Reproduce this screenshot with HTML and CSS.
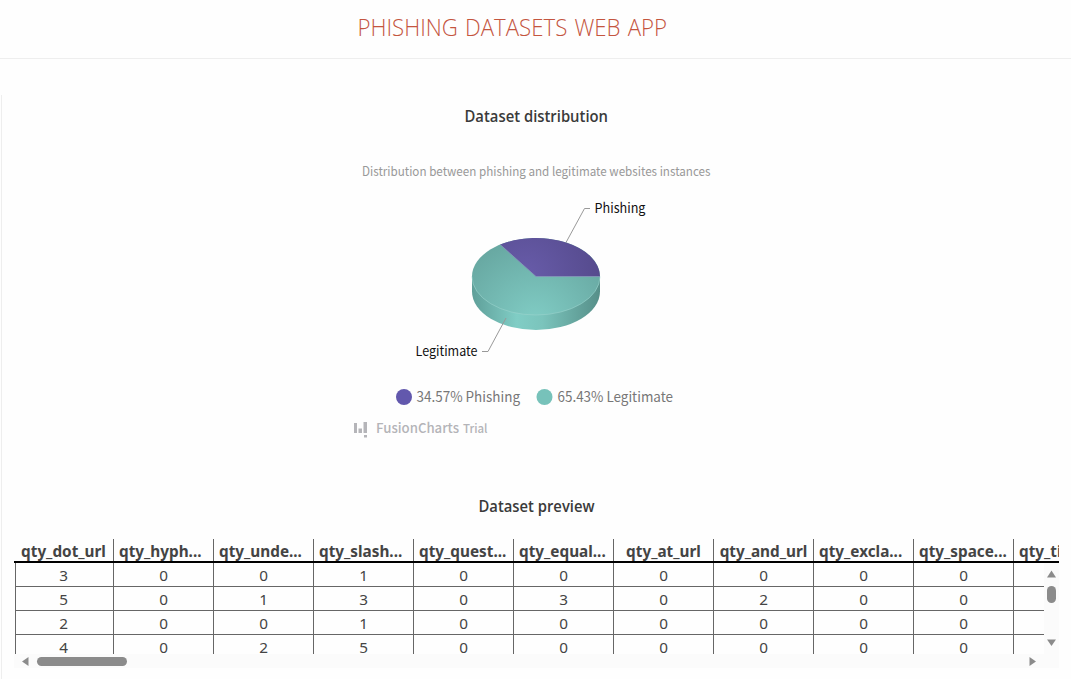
FILE: index.html
```html
<!DOCTYPE html>
<html lang="en">
<head>
<meta charset="utf-8">
<title>Phishing Datasets Web App</title>
<link rel="stylesheet" href="styles.css">
</head>
<body>
<header class="header"><svg class="title" width="320" height="40" role="heading" aria-level="1"><text x="4.500" y="26" textLength="309.500" lengthAdjust="spacingAndGlyphs">PHISHING DATASETS WEB APP</text></svg></header>
<main class="card">
  <svg class="chart" width="400" height="440" viewBox="336 95 400 440">
    <defs>
      <radialGradient id="tealTop" gradientUnits="userSpaceOnUse" cx="535" cy="322" r="95">
        <stop offset="0" stop-color="#81cdc5"/><stop offset="1" stop-color="#65a49e"/>
      </radialGradient>
      <radialGradient id="purpleTop" gradientUnits="userSpaceOnUse" cx="525" cy="276" r="78">
        <stop offset="0" stop-color="#685caa"/><stop offset="1" stop-color="#554a8c"/>
      </radialGradient>
      <linearGradient id="tealSide">
        <stop offset="0" stop-color="#5f9f99"/><stop offset=".35" stop-color="#80cdc5"/><stop offset=".55" stop-color="#7bc4bc"/><stop offset="1" stop-color="#568f89"/>
      </linearGradient>
    </defs>
    <text class="heading" x="464.500" y="122" textLength="143.500" lengthAdjust="spacingAndGlyphs">Dataset distribution</text>
    <text class="caption" x="362" y="176" textLength="348.500" lengthAdjust="spacingAndGlyphs">Distribution between phishing and legitimate websites instances</text>
    <path fill="url(#tealSide)" d="M472 276.500V291.500A64 38.500 0 0 0 600 291.500V276.500Z"/>
    <ellipse fill="url(#tealTop)" cx="536" cy="276.500" rx="64" ry="38.500"/>
    <path class="rim" d="M472 276.500A64 38.500 0 0 0 600 276.500"/>
    <path fill="url(#purpleTop)" d="M536 276.500L500.200 244.600A64 38.500 0 0 1 600 276.500Z"/>
    <path class="seam" d="M500.200 244.600L536 276.500H600"/>
    <path class="leader" d="M566 242.500L584.500 208.500H590M506 318L488 351.500H482"/>
    <text class="label" x="594.500" y="213" textLength="51" lengthAdjust="spacingAndGlyphs">Phishing</text>
    <text class="label" x="415.500" y="356" textLength="62" lengthAdjust="spacingAndGlyphs">Legitimate</text>
    <circle cx="404" cy="397" r="8" fill="#6258ad"/>
    <text class="legend" x="416.500" y="402" textLength="103.500" lengthAdjust="spacingAndGlyphs">34.57% Phishing</text>
    <circle cx="544.500" cy="397" r="8" fill="#77c2ba"/>
    <text class="legend" x="557.500" y="402" textLength="115.500" lengthAdjust="spacingAndGlyphs">65.43% Legitimate</text>
    <path class="logo" d="M354 423h3v10h-3zM358.500 428.500h3.500v4.500h-3.500zM363.500 422h3.500v11h-3.500zM364 435h3v2.500h-3z"/>
    <text class="credit" x="376" y="433" textLength="83" lengthAdjust="spacingAndGlyphs">FusionCharts</text>
    <text class="credit trial" x="463" y="433" textLength="24.500" lengthAdjust="spacingAndGlyphs">Trial</text>
    <text class="heading" x="478.500" y="512" textLength="116" lengthAdjust="spacingAndGlyphs">Dataset preview</text>
  </svg>
  <section class="grid">
    <div class="row head"><div>qty_dot_url</div><div class="long">qty_hyph...</div><div class="long">qty_unde...</div><div class="long">qty_slash...</div><div class="long">qty_quest...</div><div class="long">qty_equal...</div><div>qty_at_url</div><div>qty_and_url</div><div class="long">qty_excla...</div><div class="long">qty_space...</div><div class="long">qty_ti</div></div>
    <div class="middle">
      <div class="rows">
        <div class="row"><div>3</div><div>0</div><div>0</div><div>1</div><div>0</div><div>0</div><div>0</div><div>0</div><div>0</div><div>0</div><div></div></div>
        <div class="row"><div>5</div><div>0</div><div>1</div><div>3</div><div>0</div><div>3</div><div>0</div><div>2</div><div>0</div><div>0</div><div></div></div>
        <div class="row"><div>2</div><div>0</div><div>0</div><div>1</div><div>0</div><div>0</div><div>0</div><div>0</div><div>0</div><div>0</div><div></div></div>
        <div class="row"><div>4</div><div>0</div><div>2</div><div>5</div><div>0</div><div>0</div><div>0</div><div>0</div><div>0</div><div>0</div><div></div></div>
      </div>
      <svg class="vbar" width="15" height="91"><path d="M7.500 7.500L12 14.500H3Z"/><rect x="3" y="23" width="9" height="17" rx="4.500"/><path d="M3 76.500H12L7.500 83Z"/></svg>
    </div>
    <svg class="hbar" width="1045" height="14"><path d="M8 7.500L14.500 3V12Z"/><rect x="23" y="3" width="90" height="9" rx="4.500"/><path d="M1015.500 3L1022 7.500L1015.500 12Z"/></svg>
  </section>
</main>
</body>
</html>
```
FILE: styles.css
```css
* { box-sizing: border-box; }
body { margin: 0; height: 679px; overflow: hidden; background: #fefefe; color: #444; font-family: "Noto Sans", sans-serif; }
svg { display: block; flex: none; overflow: visible; }
.header { height: 59px; padding: 10px 0 0 353px; border-bottom: 1px solid #eee; }
.title { font-family: "Open Sans", sans-serif; font-size: 24.500px; font-weight: 300; word-spacing: 1.500px; fill: #c4553f; }
.card { height: 584px; margin: 36px 0 0 1px; border-left: 1px solid #eee; }
.chart { margin-left: 334px; font-family: "Noto Sans CJK JP", "Noto Sans CJK SC", sans-serif; }
.heading { font-family: "Open Sans", "Noto Sans", sans-serif; font-size: 15.500px; font-weight: 600; fill: #3a3a3a; }
.caption { font-size: 12.500px; fill: #999; }
.label { font-size: 13.300px; fill: #111; }
.legend { font-size: 14.200px; fill: #777; }
.credit { font-size: 13.500px; font-weight: 500; fill: #b4b4b8; }
.trial { font-size: 12px; }
.logo { fill: #b5b5b9; }
.leader { fill: none; stroke: #999; }
.rim { fill: none; stroke: #9bd4cd; stroke-width: .6; }
.seam { fill: none; stroke: #8795ba; stroke-width: .8; }
.grid { width: 1045px; margin: 4px 0 0 12px; overflow: hidden; }
.row { display: grid; grid-template-columns: 99px repeat(10, 100px); grid-template-rows: 24px; width: 1099px; height: 24px; }
.row div { border-left: 1px solid #666; border-bottom: 1px solid #666; text-align: center; font-size: 15.300px; line-height: 25px; }
.head { grid-template-rows: 22px; border-bottom: 2px solid #000; }
.head div { border-bottom: 0; font-size: 15.300px; font-weight: 700; line-height: 24px; white-space: nowrap; }
.head div:first-child { border-left: 0; }
.head .long { text-align: left; padding-left: 5px; }
.rows .row div:first-child { margin-left: 1px; padding-right: 2px; }
.middle { display: flex; height: 91px; }
.rows { width: 1030px; overflow: hidden; }
.vbar, .hbar { background: #fbfbfb; fill: #8b8b8b; }
```
